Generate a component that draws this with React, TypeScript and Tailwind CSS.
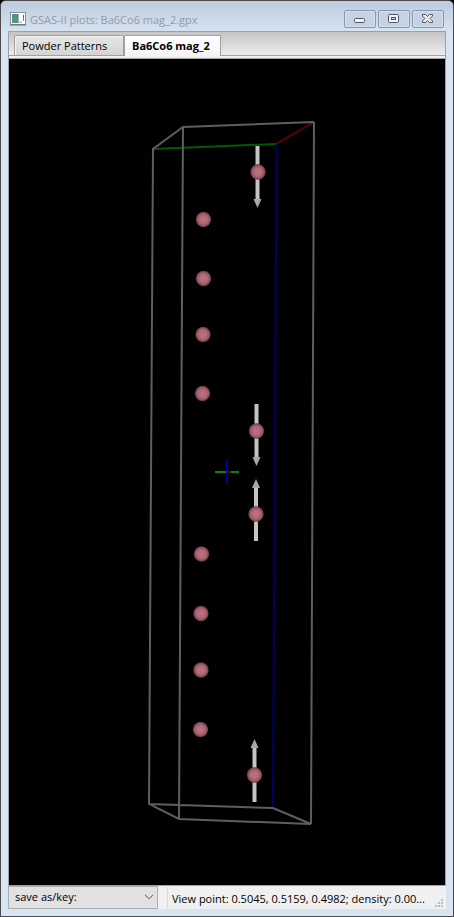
import type { ReactNode } from "react";

const ATOMS: [number, number][] = [
  [258, 172],
  [203.5, 219.5],
  [203.5, 278.5],
  [203, 334.5],
  [202.5, 393.5],
  [256.5, 431],
  [256, 514],
  [201.5, 554],
  [201, 613.5],
  [201, 670],
  [200.5, 729.5],
  [254.5, 775],
];

const MOMENTS: { x: number; tail: number; tip: number }[] = [
  { x: 257.5, tail: 146, tip: 208 },
  { x: 256.5, tail: 404, tip: 466 },
  { x: 256, tail: 541, tip: 479 },
  { x: 254.5, tail: 802, tip: 739 },
];

function Moment({ x, tail, tip }: { x: number; tail: number; tip: number }) {
  const neck = tip > tail ? tip - 9 : tip + 9;
  return (
    <g>
      <line x1={x} y1={tail} x2={x} y2={neck} stroke="#c4c4c4" strokeWidth="4" />
      <polygon points={`${x - 4},${neck} ${x + 4},${neck} ${x},${tip}`} fill="#a8a8a8" />
    </g>
  );
}

function UnitCell() {
  return (
    <svg
      viewBox="9 59 436 826"
      className="h-full w-full"
      role="img"
      aria-label="Magnetic structure unit cell"
    >
      <defs>
        <radialGradient id="atom">
          <stop offset="0" stopColor="#bf7180" />
          <stop offset="0.5" stopColor="#b46a77" />
          <stop offset="0.8" stopColor="#935661" />
          <stop offset="1" stopColor="#57343b" />
        </radialGradient>
      </defs>
      <g fill="none" strokeWidth="2">
        <path d="M153 149 276 144" stroke="#005a00" />
        <path d="M276 144 314 122" stroke="#600000" />
        <path d="M276.5 144 273 808" stroke="#000064" />
        <path
          d="M314 122 183 127 153 149 149 804 179 819 311 824 273 808 149 804M183 127 179 819M314 122 311 824"
          stroke="#5e5e5e"
        />
      </g>
      {MOMENTS.map((m) => (
        <Moment key={m.tail} x={m.x} tail={m.tail} tip={m.tip} />
      ))}
      {ATOMS.map(([x, y]) => (
        <circle key={y} cx={x} cy={y} r="7.700" fill="url(#atom)" />
      ))}
      <path d="M215 472H226M231 472H239" stroke="#008c00" strokeWidth="2" />
      <path d="M227 460V484" stroke="#000096" strokeWidth="2" />
      <path d="M227.500 472H230.500" stroke="#800000" strokeWidth="2" />
    </svg>
  );
}

function CaptionButton({ label, children }: { label: string; children: ReactNode }) {
  return (
    <button
      type="button"
      aria-label={label}
      className="flex h-[18px] w-8 items-center justify-center rounded-xs border border-[#8797b3] bg-[#c6d3e3] shadow-[inset_0_0_0_1px_#d5e0ec]"
    >
      {children}
    </button>
  );
}

export default function App() {
  return (
    <div className="h-screen bg-black font-['Open_Sans','Noto_Sans',sans-serif] text-[11px] text-black">
      <div className="flex h-full flex-col overflow-hidden rounded-t-md border border-[#4b4b50] bg-[#d7e4f2] px-[7px] pb-[7px]">
        <header className="-mx-[7px] flex h-[30px] shrink-0 items-center justify-between bg-linear-to-b from-[#bccbdc] to-[#d5e2f0] pt-[6px] pr-[9px] pl-[9px]">
          <div className="flex items-center gap-1">
            <svg width="16" height="14" viewBox="0 0 16 14" aria-hidden="true">
              <rect x="0.500" y="0.500" width="15" height="12" fill="#fff" stroke="#8e9296" />
              <path d="M0 13H16" stroke="#626468" strokeWidth="1" />
              <rect x="2" y="2" width="6" height="9" fill="#4c8f9b" />
              <rect x="2" y="6" width="5" height="5" fill="#569773" />
              <path d="M8.500 2V11" stroke="#a8b7c2" />
              <path d="M13.500 3V7" stroke="#3964a8" />
              <path d="M13.500 6V9" stroke="#49a75b" />
              <rect x="9" y="9" width="3" height="2" fill="#c9ced2" />
            </svg>
            <h1 className="pt-px leading-4 text-[#929ba5]">GSAS-II plots: Ba6Co6 mag_2.gpx</h1>
          </div>
          <div className="flex gap-0.5">
            <CaptionButton label="Minimize">
              <svg width="12" height="12" viewBox="0 0 12 12" aria-hidden="true">
                <rect x="0.500" y="5.500" width="10" height="4" rx="1" fill="#f2f2f2" stroke="#52566c" />
              </svg>
            </CaptionButton>
            <CaptionButton label="Maximize">
              <svg width="12" height="10" viewBox="0 0 12 10" aria-hidden="true">
                <rect x="0.500" y="0.500" width="10" height="8" rx="1" fill="#f2f2f2" stroke="#52566c" />
                <rect x="3.500" y="3.500" width="4" height="2" fill="#c4d0e0" stroke="#52566c" />
              </svg>
            </CaptionButton>
            <CaptionButton label="Close">
              <svg width="12" height="10" viewBox="0 0 12 10" aria-hidden="true">
                <path
                  d="M.5 .5H3.500L5.500 2.500 7.500 .5H10.500V2L8 4.500 10.500 7V8.500H7.500L5.500 6.500 3.500 8.500H.5V7L3 4.500 .5 2Z"
                  fill="#eeeeee"
                  stroke="#52566c"
                />
              </svg>
            </CaptionButton>
          </div>
        </header>

        <div className="flex min-h-0 flex-1 flex-col">
          <main className="flex min-h-0 flex-1 flex-col border border-[#a0a0a0]">
            <div className="flex h-[27px] shrink-0 flex-col justify-end border-b border-[#a0a0a0] bg-linear-to-b from-[#c4c4c4] to-[#f2f2f2]">
              <div role="tablist" className="flex items-end border-b border-[#a0a0a0] pl-[5px]">
                <button
                  type="button"
                  role="tab"
                  aria-selected="false"
                  className="h-5 w-[110px] rounded-t-xs border border-b-0 border-[#a0a0a0] bg-linear-to-b from-[#e6e6e6] to-[#d4d4d4] pl-[7px] text-left leading-5 whitespace-nowrap shadow-[inset_1px_1px_0_#f4f4f4]"
                >
                  Powder Patterns
                </button>
                <button
                  type="button"
                  role="tab"
                  aria-selected="true"
                  className="-mb-px h-[21px] w-[97px] rounded-t-xs border border-b-0 border-[#a0a0a0] bg-linear-to-b from-white to-[#f4f4f4] pl-[7px] text-left leading-5 font-bold whitespace-nowrap"
                >
                  Ba6Co6 mag_2
                </button>
              </div>
              <div className="h-0.5 bg-[#f0f0f0]" />
            </div>
            <div role="tabpanel" className="min-h-0 flex-1 bg-black">
              <UnitCell />
            </div>
          </main>

          <footer className="flex h-[23px] shrink-0 items-stretch bg-[#f0f0f0]">
            <div className="relative w-[150px] shrink-0">
              <select
                aria-label="Save as or key"
                className="h-full w-full appearance-none border border-[#adadad] bg-[#e1e1e1] pl-[6px] text-[11px]"
              >
                <option>save as/key:</option>
              </select>
              <svg
                width="10"
                height="6"
                viewBox="0 0 10 6"
                className="pointer-events-none absolute top-2 right-1"
                aria-hidden="true"
              >
                <path d="M1 .8 5 4.800 9 .8" fill="none" stroke="#505050" />
              </svg>
            </div>
            <p className="my-px ml-[9px] min-w-0 flex-1 truncate border-l border-[#d7d7d7] pl-1 leading-6">
              View point: 0.5045, 0.5159, 0.4982; density: 0.00...
            </p>
            <svg width="12" height="12" viewBox="0 0 12 12" className="mt-auto" aria-hidden="true">
              <path
                d="M7 2h2v2h-2zM4 5h2v2h-2zM7 5h2v2h-2zM1 8h2v2h-2zM4 8h2v2h-2zM7 8h2v2h-2z"
                fill="#bcbcbc"
              />
            </svg>
          </footer>
        </div>
      </div>
    </div>
  );
}
